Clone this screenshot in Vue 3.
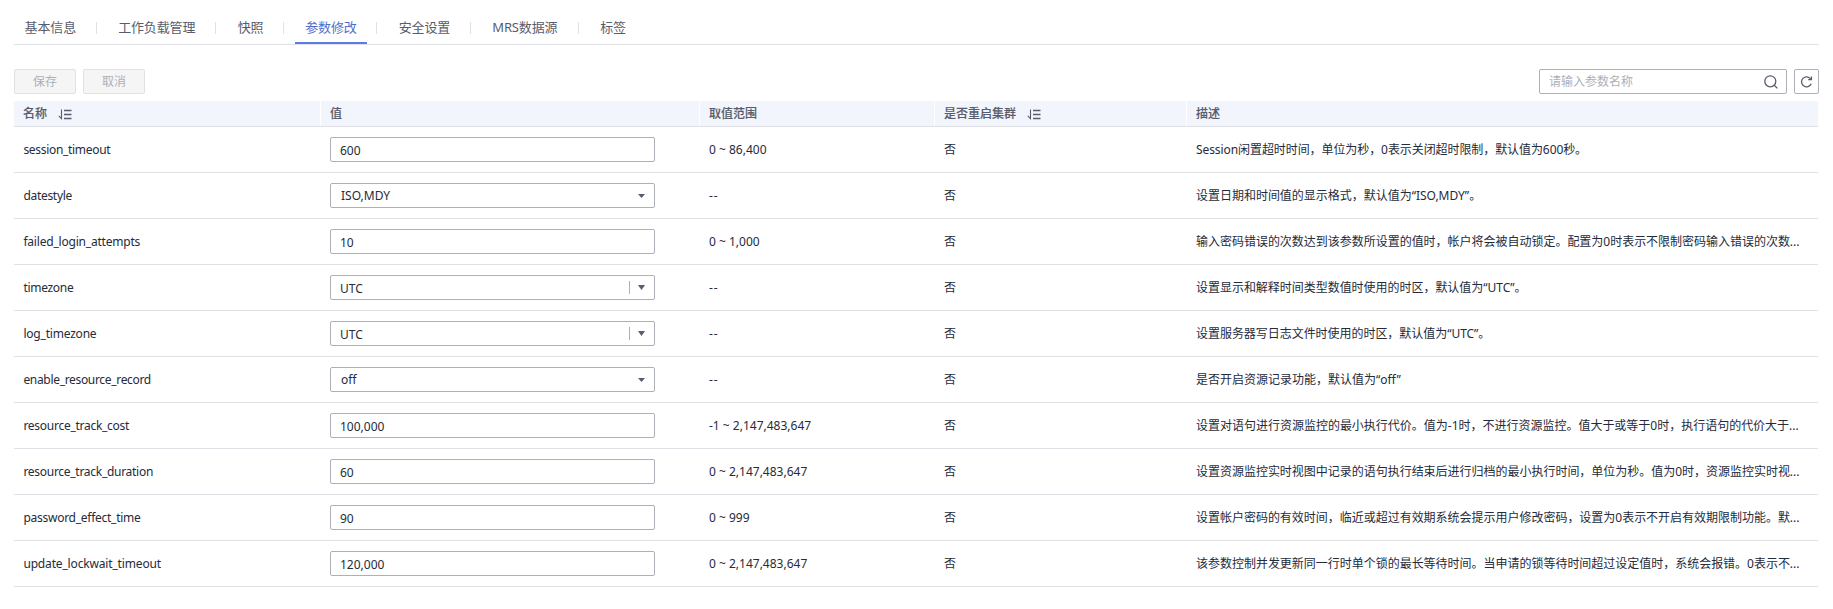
<script setup>
const tabs = [
  { label: '基本信息', w: 72 },
  { label: '工作负载管理', w: 98 },
  { label: '快照', w: 46 },
  { label: '参数修改', w: 72, active: true },
  { label: '安全设置', w: 72 },
  { label: 'MRS数据源', w: 86.4 },
  { label: '标签', w: 46 },
]
const columns = [
  { label: '名称', sortable: true },
  { label: '值' },
  { label: '取值范围' },
  { label: '是否重启集群', sortable: true },
  { label: '描述' },
]
// `track` and `descTrack` are letter-spacing values in px
const rows = [
  { name: 'session_timeout', track: -0.31, value: '600', type: 'input', range: '0 ~ 86,400', descTrack: -0.08, desc: 'Session闲置超时时间，单位为秒，0表示关闭超时限制，默认值为600秒。' },
  { name: 'datestyle', track: -0.3, value: 'ISO,MDY', type: 'select', range: '--', descTrack: -0.02, desc: '设置日期和时间值的显示格式，默认值为“ISO,MDY”。' },
  { name: 'failed_login_attempts', track: -0.2, value: '10', type: 'input', range: '0 ~ 1,000', descTrack: -0.02, desc: '输入密码错误的次数达到该参数所设置的值时，帐户将会被自动锁定。配置为0时表示不限制密码输入错误的次数...' },
  { name: 'timezone', track: -0.3, value: 'UTC', type: 'combo', range: '--', descTrack: -0.03, desc: '设置显示和解释时间类型数值时使用的时区，默认值为“UTC”。' },
  { name: 'log_timezone', track: -0.2, value: 'UTC', type: 'combo', range: '--', descTrack: -0.04, desc: '设置服务器写日志文件时使用的时区，默认值为“UTC”。' },
  { name: 'enable_resource_record', track: -0.32, value: 'off', type: 'select', range: '--', descTrack: 0, desc: '是否开启资源记录功能，默认值为“off”' },
  { name: 'resource_track_cost', track: -0.27, value: '100,000', type: 'input', range: '-1 ~ 2,147,483,647', descTrack: -0.01, desc: '设置对语句进行资源监控的最小执行代价。值为-1时，不进行资源监控。值大于或等于0时，执行语句的代价大于...' },
  { name: 'resource_track_duration', track: -0.28, value: '60', type: 'input', range: '0 ~ 2,147,483,647', descTrack: -0.02, desc: '设置资源监控实时视图中记录的语句执行结束后进行归档的最小执行时间，单位为秒。值为0时，资源监控实时视...' },
  { name: 'password_effect_time', track: -0.26, value: '90', type: 'input', range: '0 ~ 999', descTrack: -0.02, desc: '设置帐户密码的有效时间，临近或超过有效期系统会提示用户修改密码，设置为0表示不开启有效期限制功能。默...' },
  { name: 'update_lockwait_timeout', track: -0.16, value: '120,000', type: 'input', range: '0 ~ 2,147,483,647', descTrack: -0.02, desc: '该参数控制并发更新同一行时单个锁的最长等待时间。当申请的锁等待时间超过设定值时，系统会报错。0表示不...' },
]
</script>

<template>
  <div class="page">
    <nav class="tabs">
      <template v-for="(t, i) in tabs" :key="t.label">
        <i v-if="i" class="sep"></i>
        <a class="tab" :class="{ active: t.active }" :style="{ width: t.w + 'px' }">{{ t.label }}</a>
      </template>
    </nav>
    <div class="toolbar">
      <button class="btn" disabled>保存</button>
      <button class="btn" disabled>取消</button>
      <div class="search">
        <span>请输入参数名称</span>
        <svg width="14" height="14" viewBox="0 0 14 14" fill="none" stroke="#575d6c" stroke-width="1.3">
          <circle cx="6.3" cy="6.3" r="5.5" /><path d="M10.2 10.2 13.4 13.4" />
        </svg>
      </div>
      <div class="refresh">
        <svg width="13" height="13" viewBox="0 0 13 13" fill="none" stroke="#575d6c" stroke-width="1.3">
          <path d="M11.2 8.7A5 5 0 1 1 10.6 3.9" /><path d="M11.4 1.4V4.6H8.2" />
        </svg>
      </div>
    </div>
    <div class="table">
      <div class="row head">
        <div v-for="c in columns" :key="c.label" class="cell">
          {{ c.label }}
          <svg v-if="c.sortable" class="sort" width="14" height="11" viewBox="0 0 14 11" fill="none" stroke="#575d6c">
            <path d="M3.5 0.5V9.6L0.8 6.9" stroke-width="1.1" /><path d="M6 1.5H13.5M6 5.5H13.5M6 9.5H13.5" stroke-width="1.3" />
          </svg>
        </div>
      </div>
      <div v-for="r in rows" :key="r.name" class="row">
        <div class="cell name" :style="{ letterSpacing: r.track + 'px' }">{{ r.name }}</div>
        <div class="cell">
          <div class="field" :class="r.type">
            <span>{{ r.value }}</span>
            <i v-if="r.type === 'combo'" class="bar"></i>
            <svg v-if="r.type === 'select'" width="7" height="4" viewBox="0 0 7 4"><path d="M0 0H7L3.5 4Z" fill="#575d6c" /></svg>
            <svg v-if="r.type === 'combo'" width="7" height="5" viewBox="0 0 7 5"><path d="M0 0H7L3.5 5Z" fill="#575d6c" /></svg>
          </div>
        </div>
        <div class="cell" :class="{ dashes: r.range === '--' }">{{ r.range }}</div>
        <div class="cell">否</div>
        <div class="cell desc" :style="{ letterSpacing: r.descTrack + 'px' }">{{ r.desc }}</div>
      </div>
    </div>
  </div>
</template>

<style>
body { background: #fff; }
</style>

<style scoped>
.page {
  box-sizing: border-box;
  width: 1833px;
  height: 609px;
  padding: 11px 14px 0;
  overflow: hidden;
  font: 12px/18px "Noto Sans", "Noto Sans CJK SC", sans-serif;
  color: #252b3a;
}
.tabs {
  display: flex;
  height: 33px;
  border-bottom: 1px solid #dfe1e6;
  font-size: 13px;
  color: #575d6c;
}
.tab {
  box-sizing: border-box;
  flex: none;
  height: 33px;
  padding-left: 10.6px;
  line-height: 32px;
  letter-spacing: -0.15px;
  white-space: nowrap;
}
.tab.active { color: #526ecc; border-bottom: 2px solid #5e7ce0; }
.sep { flex: none; width: 1px; height: 12px; margin: 11px 10.65px 0 9.9px; background: #dfe1e6; }
.toolbar { display: flex; height: 25px; margin: 24px 0 7px; }
.btn {
  width: 62px;
  height: 25px;
  margin-right: 7px;
  padding: 0;
  border: 1px solid #dfe1e6;
  border-radius: 2px;
  background: #f5f5f6;
  font: inherit;
  color: #adb0b8;
}
.search, .refresh, .field {
  box-sizing: border-box;
  display: flex;
  align-items: center;
  height: 25px;
  border: 1px solid #adb0b8;
  border-radius: 2px;
}
.search {
  width: 248px;
  margin-left: auto;
  margin-right: 7px;
  padding: 0 8px 0 9px;
  justify-content: space-between;
  color: #adb0b8;
}
.refresh { width: 25px; justify-content: center; }
.table { width: 1804px; }
.row {
  display: grid;
  grid-template-columns: 307px 379px 235px 252px 631px;
  height: 45px;
  border-bottom: 1px solid #dfe1e6;
}
.cell { display: flex; align-items: center; padding-left: 9px; white-space: nowrap; overflow: hidden; }
.cell.name { padding-left: 9.4px; }
.cell.dashes { letter-spacing: 0.8px; }
.head { height: 25px; background: #f2f5fc; color: #575d6c; font-weight: 500; -webkit-text-stroke: 0.15px #575d6c; }
.head .cell + .cell { margin-left: -1px; padding-left: 9px; border-left: 1px solid #fff; }
.sort { margin: 2px 0 0 11px; }
.field { width: 325px; padding: 0 9px 0 9px; }
.field span { flex: 1; padding-top: 2px; }
.field.select span { padding: 0 0 0 1px; }
.bar { width: 1px; height: 13px; margin-right: 8px; background: #adb0b8; }
</style>
